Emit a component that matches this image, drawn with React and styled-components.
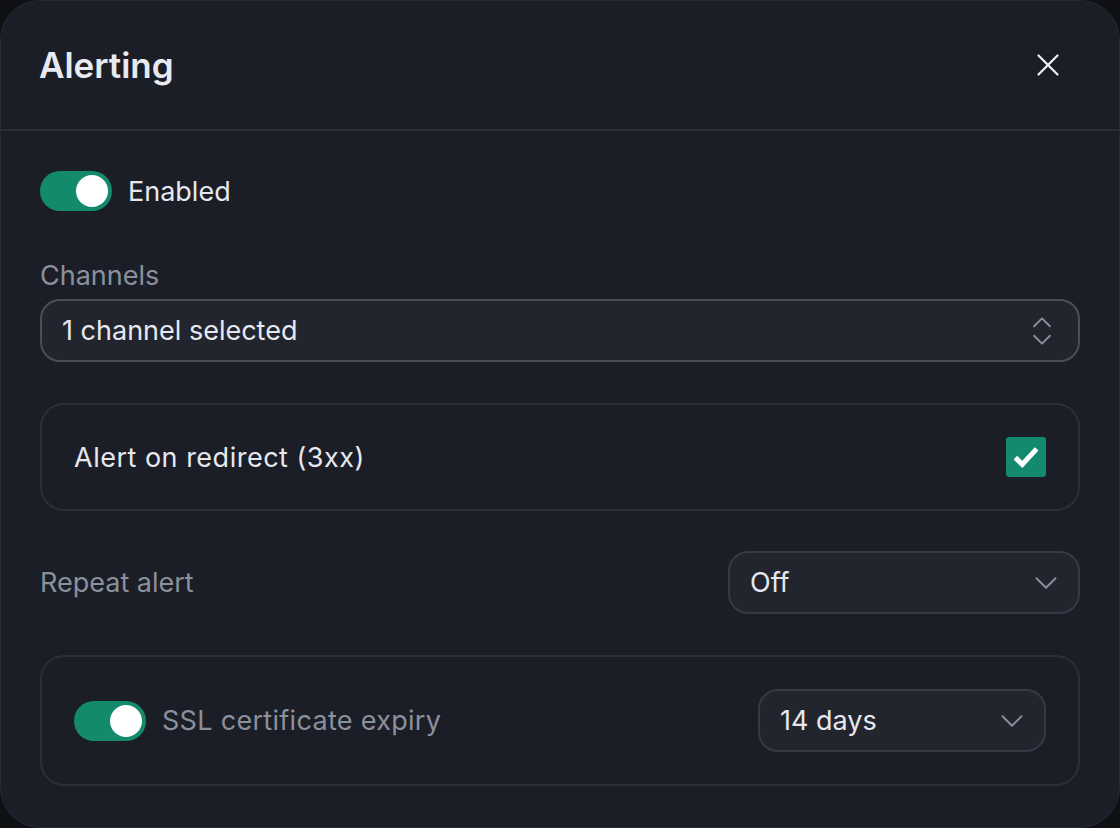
import React from 'react';
import styled, { createGlobalStyle } from 'styled-components';
import { X, ChevronDown, ChevronsUpDown } from 'lucide-react';

const Global = createGlobalStyle`
  html, body {
    margin: 0;
    padding: 0;
    background: #0e1014;
    font-family: Inter, "Noto Sans", sans-serif;
  }
  * { box-sizing: border-box; }
`;

const Dialog = styled.div`
  width: 1120px;
  height: 828px;
  background: #1b1e26;
  border: 1px solid #262a33;
  border-radius: 40px;
  display: flex;
  flex-direction: column;
  overflow: hidden;
`;

const Header = styled.div`
  height: 130px;
  flex: none;
  display: flex;
  align-items: center;
  justify-content: space-between;
  padding: 0 52px 0 38px;
  border-bottom: 2px solid #2a2e37;
`;

const Title = styled.h2`
  margin: 0;
  font-size: 35px;
  font-weight: 600;
  color: #e8eaf2;
`;

const CloseBtn = styled.button`
  background: none;
  border: none;
  padding: 0;
  color: #eef0f6;
  display: flex;
  cursor: pointer;
`;

const Body = styled.div`
  padding: 40px 39px 0;
  display: flex;
  flex-direction: column;
`;

const Row = styled.div`
  display: flex;
  align-items: center;
  gap: ${(p) => p.gap || 16}px;
`;

const Track = styled.div`
  width: 72px;
  height: 40px;
  border-radius: 20px;
  background: ${(p) => (p.on ? '#138a6c' : '#3a3f4b')};
  display: flex;
  align-items: center;
  justify-content: ${(p) => (p.on ? 'flex-end' : 'flex-start')};
  padding: 0 4px;
  flex: none;
`;

const Knob = styled.div`
  width: 32px;
  height: 32px;
  border-radius: 50%;
  background: #ffffff;
`;

const Text = styled.span`
  font-size: ${(p) => p.size || 27}px;
  letter-spacing: ${(p) => p.ls || 0}px;
  color: ${(p) => (p.muted ? '#8b909d' : '#e6e8f0')};
  font-weight: 400;
`;

const Field = styled.div`
  margin-top: 49px;
  display: flex;
  flex-direction: column;
  gap: 7px;
`;

const Label = styled.label`
  font-size: 27px;
  line-height: 32px;
  color: #8b909d;
`;

const Select = styled.div`
  height: 63px;
  width: ${(p) => p.w || 'auto'};
  border-radius: 20px;
  border: 2px solid ${(p) => (p.strong ? '#4a4e59' : '#363a45')};
  background: #22252e;
  display: flex;
  align-items: center;
  justify-content: space-between;
  padding: 0 ${(p) => p.pr || 13}px 0 20px;
  font-size: 27px;
  color: #e6e8f0;
  flex: none;
`;

const Icon = styled.span`
  display: flex;
  color: #8b909d;
`;

const Card = styled.div`
  margin-top: 41px;
  min-height: ${(p) => p.h}px;
  border: 2px solid #2b2f39;
  border-radius: 24px;
  display: flex;
  align-items: center;
  justify-content: space-between;
  padding: 0 32px;
`;

const Check = styled.div`
  width: 40px;
  height: 40px;
  border-radius: 3px;
  background: #138a6f;
  display: flex;
  align-items: center;
  justify-content: center;
`;

const SplitRow = styled.div`
  margin-top: 40px;
  display: flex;
  align-items: center;
  justify-content: space-between;
`;

const Toggle = ({ on = true }) => (
  <Track on={on}>
    <Knob />
  </Track>
);

export default function App() {
  return (
    <>
      <Global />
      <Dialog>
        <Header>
          <Title>Alerting</Title>
          <CloseBtn aria-label="Close">
            <X size={38} strokeWidth={1.4} />
          </CloseBtn>
        </Header>
        <Body>
          <Row>
            <Toggle on />
            <Text>Enabled</Text>
          </Row>

          <Field>
            <Label>Channels</Label>
            <Select strong pr={17}>
              <span>1 channel selected</span>
              <Icon>
                <ChevronsUpDown size={38} strokeWidth={1.2} />
              </Icon>
            </Select>
          </Field>

          <Card h={108}>
            <Text ls={0.5}>Alert on redirect (3xx)</Text>
            <Check>
              <svg width="30" height="30" viewBox="0 0 24 24">
                <path
                  d="M3.5 12.5 L9 18 L20.5 5.5"
                  fill="none"
                  stroke="#fff"
                  strokeWidth="4"
                  strokeLinejoin="miter"
                />
              </svg>
            </Check>
          </Card>

          <SplitRow>
            <Text muted>Repeat alert</Text>
            <Select w="352px">
              <span>Off</span>
              <Icon>
                <ChevronDown size={38} strokeWidth={1.2} />
              </Icon>
            </Select>
          </SplitRow>

          <Card h={131}>
            <Row>
              <Toggle on />
              <Text muted ls={0.3}>SSL certificate expiry</Text>
            </Row>
            <Select w="288px">
              <span>14 days</span>
              <Icon>
                <ChevronDown size={38} strokeWidth={1.2} />
              </Icon>
            </Select>
          </Card>
        </Body>
      </Dialog>
    </>
  );
}
